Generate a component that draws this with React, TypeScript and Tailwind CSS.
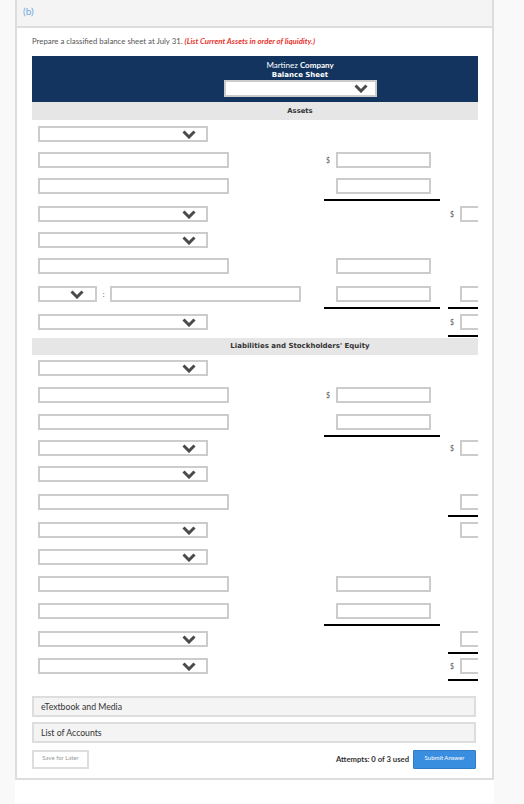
import React from "react";

type Left = "select" | "text" | "split";
type Cell = "$" | "box" | null;

type RowSpec = {
	left: Left;
	mid?: Cell;
	midLine?: boolean;
	right?: Cell;
	rightLine?: boolean;
	h: string;
};

const Chevron = ({ className = "" }: { className?: string }) => (
	<svg className={className} width="14" height="9" viewBox="0 0 14 9" fill="none">
		<polyline points="1.5,1.5 7,7 12.5,1.5" stroke="#4a4a4a" strokeWidth="3" strokeLinecap="butt" />
	</svg>
);

const Box = ({ w = "w-[95px]" }: { w?: string }) => (
	<div className={`${w} h-[16px] shrink-0 border-2 border-[#cccccc] bg-white`} />
);

const Select = ({ w = "w-[170px]", pr = "pr-[10px]" }: { w?: string; pr?: string }) => (
	<div className={`${w} ${pr} h-[16px] shrink-0 border-2 border-[#cccccc] bg-white flex items-center justify-end`}>
		<Chevron />
	</div>
);

const Amount = ({ kind, line, w }: { kind: Cell; line?: boolean; w: string }) => (
	<div className={`${w} shrink-0 pl-[2px] flex ${line ? "pb-[5px] border-b-2 border-black" : ""}`}>
		{kind ? (
			<>
				<span className="w-[10px] shrink-0 text-[7px] leading-[16px] text-[#555]">{kind === "$" ? "$" : ""}</span>
				<Box />
			</>
		) : null}
	</div>
);

const Row = ({ r }: { r: RowSpec }) => (
	<div className={`${r.h} flex items-start`}>
		<div className="w-[292px] shrink-0 pl-[6px] flex items-start">
			{r.left === "select" && <Select />}
			{r.left === "text" && <Box w="w-[191px]" />}
			{r.left === "split" && (
				<>
					<Select w="w-[59px]" pr="pr-[11px]" />
					<span className="w-[13px] text-center text-[7px] leading-[16px] text-[#555]">:</span>
					<Box w="w-[191px]" />
				</>
			)}
		</div>
		<Amount kind={r.mid ?? null} line={r.midLine} w="w-[116px]" />
		<div className="w-[8px] shrink-0" />
		<Amount kind={r.right ?? null} line={r.rightLine} w="w-[116px]" />
	</div>
);

const assets: RowSpec[] = [
	{ left: "select", h: "h-[26px]" },
	{ left: "text", mid: "$", h: "h-[26px]" },
	{ left: "text", mid: "box", midLine: true, h: "h-[28px]" },
	{ left: "select", right: "$", h: "h-[26px]" },
	{ left: "select", h: "h-[26px]" },
	{ left: "text", mid: "box", h: "h-[28px]" },
	{ left: "split", mid: "box", midLine: true, right: "box", rightLine: true, h: "h-[28px]" },
	{ left: "select", right: "$", rightLine: true, h: "h-[24px]" },
];

const liabilities: RowSpec[] = [
	{ left: "select", h: "h-[27px]" },
	{ left: "text", mid: "$", h: "h-[27px]" },
	{ left: "text", mid: "box", midLine: true, h: "h-[26px]" },
	{ left: "select", right: "$", h: "h-[26px]" },
	{ left: "select", h: "h-[28px]" },
	{ left: "text", right: "box", rightLine: true, h: "h-[28px]" },
	{ left: "select", right: "box", h: "h-[27px]" },
	{ left: "select", h: "h-[27px]" },
	{ left: "text", mid: "box", h: "h-[27px]" },
	{ left: "text", mid: "box", midLine: true, h: "h-[28px]" },
	{ left: "select", right: "box", rightLine: true, h: "h-[27px]" },
	{ left: "select", right: "$", rightLine: true, h: "h-[28px]" },
];

export default function App() {
	return (
		<div className="min-h-screen bg-[#f9f9f9] font-['Lato','Liberation_Sans',sans-serif]">
			<div className="ml-[15px] w-[479px] min-h-[804px] bg-white">
				<div className="border-x-2 border-b-2 border-[#dddddd]">
					<div className="h-[28px] bg-[#f4f4f4] border-b-2 border-[#dddddd] pl-[6px] pt-[4px] text-[10px] leading-[14px] text-[#6fa8dc]">
						(b)
					</div>
					<div className="pl-[15px] pr-[14px] pt-[8px] pb-[9px]">
						<p className="text-[7.8px] leading-[10px] text-[#555]">
							Prepare a classified balance sheet at July 31.{" "}
							<span className="font-bold italic text-[#e8322b]">(List Current Assets in order of liquidity.)</span>
						</p>

						<div className="mt-[10px] w-[446px] overflow-hidden">
							<div className="h-[46px] bg-[#12345f] pl-[90px] pt-[4px] flex flex-col items-center text-white">
								<div className="text-[8px] leading-[10px]">
									Martinez <span className="font-bold">Company</span>
								</div>
								<div className="text-[7px] leading-[10px] font-bold font-['DejaVu_Sans',sans-serif]">Balance Sheet</div>
								<div className="w-[153px] h-[17px] border-2 border-[#cccccc] bg-white flex items-center justify-end pr-[7px]">
									<Chevron />
								</div>
							</div>

							<div className="h-[18px] bg-[#e6e6e6] pl-[90px] flex items-center justify-center text-[6.8px] font-bold text-[#333] font-['DejaVu_Sans',sans-serif]">
								Assets
							</div>
							<div className="pt-[6px]">
								{assets.map((r, i) => (
									<Row key={i} r={r} />
								))}
							</div>

							<div className="h-[17px] bg-[#e6e6e6] pl-[90px] flex items-center justify-center text-[7px] font-bold text-[#333] font-['DejaVu_Sans',sans-serif]">
								Liabilities and Stockholders' Equity
							</div>
							<div className="pt-[5px]">
								{liabilities.map((r, i) => (
									<Row key={i} r={r} />
								))}
							</div>
						</div>

						<div className="mt-[10px] w-[444px] flex flex-col gap-[5px]">
							<div className="h-[21px] border-2 border-[#dddddd] bg-[#f4f4f4] pl-[7px] flex items-center text-[8.7px] text-[#333]">
								eTextbook and Media
							</div>
							<div className="h-[21px] border-2 border-[#dddddd] bg-[#f4f4f4] pl-[7px] flex items-center text-[8.7px] text-[#333]">
								List of Accounts
							</div>
						</div>

						<div className="mt-[7px] w-[444px] flex items-center">
							<button className="w-[57px] h-[19px] border-2 border-[#dddddd] bg-white text-[6px] text-[#999] pt-[1px] flex items-start justify-center">
								Save for Later
							</button>
							<div className="ml-auto mr-[4px] text-[7.7px] font-bold text-[#333]">Attempts: 0 of 3 used</div>
							<button className="w-[63px] h-[19px] rounded-[1px] border border-[#2f7bc6] bg-[#3a8ee0] text-[6px] text-white pt-[2px] flex items-start justify-center">
								Submit Answer
							</button>
						</div>
					</div>
				</div>
			</div>
		</div>
	);
}
